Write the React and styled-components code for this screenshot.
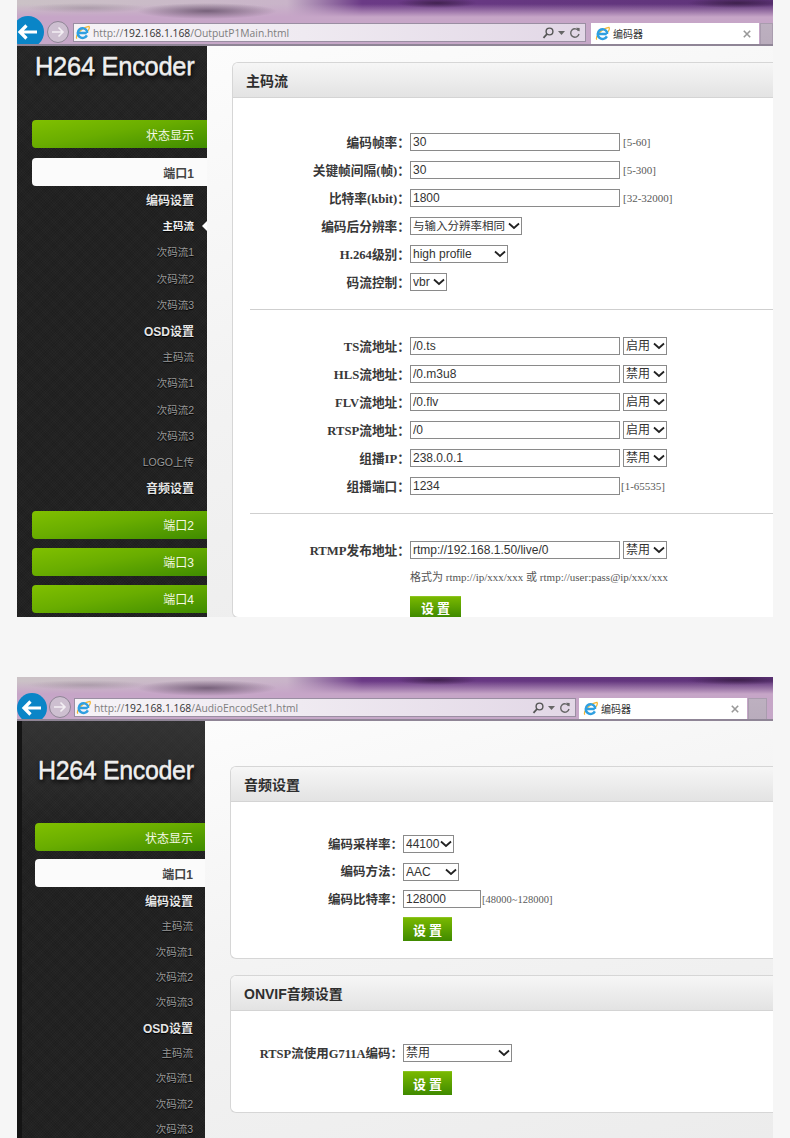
import React from "react";
import styled, { createGlobalStyle } from "styled-components";

const Global = createGlobalStyle`
  html, body { margin: 0; padding: 0; background: #f6f6f6; height: 1138px; overflow: hidden; }
  * { box-sizing: border-box; }
`;

const Page = styled.div`
  width: 756px;
  margin-left: 17px;
  display: flex;
  flex-direction: column;
  gap: 60px;
`;
const Shot = styled.section`
  height: ${(p) => p.$h}px;
  overflow: hidden;
  display: flex;
  flex-direction: column;
`;

/* ---------- browser chrome ---------- */
const Chrome = styled.header`
  height: ${(p) => p.$h}px;
  flex: none;
  padding-top: ${(p) => p.$pad}px;
  display: flex;
  align-items: flex-start;
  overflow: hidden;
  border-bottom: 2px solid #8f8596;
  background:
    radial-gradient(ellipse 70px 8px at 190px 11px, rgba(85, 65, 90, .7), rgba(85, 65, 90, 0)),
    radial-gradient(ellipse 60px 5px at 70px 8px, rgba(120, 110, 120, .35), rgba(120, 110, 120, 0)),
    radial-gradient(ellipse 40px 5px at 420px 3px, rgba(40, 20, 45, .6), rgba(40, 20, 45, 0)),
    radial-gradient(ellipse 50px 5px at 720px 3px, rgba(40, 20, 45, .6), rgba(40, 20, 45, 0)),
    linear-gradient(180deg, rgba(197, 164, 198, 0) 0, rgba(197, 164, 198, 0) 4px, #c6a5c7 17px, #c6a8c8 100%),
    linear-gradient(90deg, #cbc2c6 0, #c9b4c9 270px, #6b3a86 345px, #5e3379 100%);
`;
const BackSlot = styled.div`
  width: ${(p) => p.$w}px;
  margin-top: -${(p) => p.$up}px;
  flex: none;
  height: 32px;
`;
const ForwardSlot = styled.div`
  width: ${(p) => p.$w}px;
  margin-top: -3px;
  flex: none;
  height: 24px;
`;
const Address = styled.div`
  width: ${(p) => p.$w}px;
  flex: none;
  height: 19px;
  display: flex;
  align-items: center;
  gap: 3px;
  padding: 0 4px 0 1px;
  border: 1px solid #9a8ea2;
  background: linear-gradient(90deg, #f6f3f7 0, #efeaf1 45%, #e2d7e6 100%);
  font: 10.3px "Open Sans", "Liberation Sans", sans-serif;
  color: #7d7d7d;
`;
const Url = styled.span`
  flex: 1;
  white-space: nowrap;
  & b { font-weight: 400; color: #333; }
`;
const Tools = styled.div`
  display: flex;
  align-items: center;
  gap: 4px;
`;
const Tab = styled.div`
  width: 168px;
  margin-left: ${(p) => p.$gap}px;
  height: 23px;
  flex: none;
  display: flex;
  align-items: center;
  gap: 3px;
  padding: 0 8px 2px 4px;
  background: #fff;
  font: 10px "Noto Sans CJK SC", sans-serif;
  color: #333;
  & > span { flex: 1; }
`;
const TabStub = styled.div`
  flex: 1;
  margin-left: 1px;
  margin-right: ${(p) => p.$right}px;
  height: 22px;
  background: linear-gradient(180deg, #bdb0c0, #b9acbc);
  border: 1px solid #a99cae;
  border-bottom: 0;
`;

/* ---------- body ---------- */
const Body = styled.div`
  flex: 1;
  min-height: 0;
  display: flex;
`;
const Sidebar = styled.aside`
  width: ${(p) => p.$w}px;
  flex: none;
  border-left: ${(p) => p.$strip}px solid #141414;
  background:
    linear-gradient(180deg, rgba(70, 70, 70, ${(p) => p.$glow}) 0, rgba(70, 70, 70, 0) 110px),
    repeating-linear-gradient(45deg, rgba(255, 255, 255, .012) 0 1px, rgba(0, 0, 0, .03) 1px 2px),
    repeating-linear-gradient(-45deg, rgba(255, 255, 255, .012) 0 1px, rgba(0, 0, 0, .03) 1px 2px),
    #202020;
  display: flex;
  flex-direction: column;
  font: 12px "Liberation Sans", "Noto Sans CJK SC", sans-serif;
`;
const Logo = styled.div`
  height: ${(p) => p.$h}px;
  flex: none;
  padding: ${(p) => p.$top}px 0 0 ${(p) => p.$left}px;
  font: ${(p) => p.$size}px/1 "Liberation Sans", sans-serif;
  letter-spacing: ${(p) => p.$track}px;
  white-space: nowrap;
  color: #f0f0f0;
  -webkit-text-stroke: .3px #e6e6e6;
  text-shadow: 0 1px 0 #8a8a8a, 1px 3px 4px #000;
`;
const NavButton = styled.div`
  height: 28px;
  flex: none;
  margin: 0 0 ${(p) => p.$after}px ${(p) => p.$left}px;
  padding-right: ${(p) => p.$right}px;
  display: flex;
  align-items: center;
  justify-content: flex-end;
  border-radius: 4px 0 0 4px;
  background: ${(p) => (p.$open ? "#fbfbfb" : "linear-gradient(170deg, #80c000 0, #69ad00 45%, #3f8c00 100%)")};
  color: ${(p) => (p.$open ? "#444" : "#f4f8e4")};
  font-weight: ${(p) => (p.$open ? 700 : 400)};
`;
const SubList = styled.div`
  margin: ${(p) => p.$top}px 0 ${(p) => p.$bottom}px;
  display: flex;
  flex-direction: column;
`;
const SubItem = styled.div`
  position: relative;
  height: ${(p) => p.$step}px;
  flex: none;
  padding-right: ${(p) => p.$right}px;
  display: flex;
  align-items: center;
  justify-content: flex-end;
  font-size: ${(p) => (p.$head ? 12 : 10.5)}px;
  color: ${(p) => (p.$head ? "#e6e6e6" : p.$active ? "#f2f2f2" : "#999")};
  font-weight: ${(p) => (p.$head || p.$active ? 700 : 400)};
  text-shadow: 0 1px 1px #000;
`;
const ActiveMark = styled.i`
  position: absolute;
  right: 0;
  top: 50%;
  margin-top: -5px;
  border: 5px solid transparent;
  border-right-color: #fff;
  border-left-width: 0;
`;

const Main = styled.main`
  flex: 1;
  min-width: 0;
  padding: ${(p) => p.$top}px 0 0 25px;
  background: linear-gradient(165deg, #fcfcfc 0, #f3f3f3 45%, #ececec 100%);
`;
const Card = styled.article`
  margin-bottom: 16px;
  background: #fff;
  border: 1px solid #d6d6d6;
  border-right: 0;
  border-radius: 6px 0 0 6px;
  overflow: hidden;
`;
const CardHeader = styled.h2`
  margin: 0;
  height: 35px;
  padding: 0 13px;
  display: flex;
  align-items: center;
  background: linear-gradient(180deg, #f6f6f6, #e3e3e3);
  border-bottom: 1px solid #d4d4d4;
  font: 700 14px "Liberation Sans", "Noto Sans CJK SC", sans-serif;
  color: #2e2e2e;
`;
const Form = styled.div`
  padding: ${(p) => p.$top}px 0 ${(p) => p.$bottom}px 17px;
  display: flex;
  flex-direction: column;
`;
const Row = styled.div`
  height: 18px;
  margin-bottom: ${(p) => p.$gap}px;
  display: flex;
  align-items: center;
`;
const Label = styled.label`
  width: ${(p) => p.$w}px;
  flex: none;
  padding-bottom: 2px;
  text-align: right;
  white-space: nowrap;
  font: 600 ${(p) => p.$size}px "Liberation Serif", "Noto Sans CJK SC", serif;
  color: #383838;
`;
const TextInput = styled.input`
  width: ${(p) => p.$w}px;
  height: 18px;
  flex: none;
  padding: 0 2px;
  margin: 0;
  border: 1px solid #8a8a8a;
  border-radius: 0;
  outline: 0;
  background: #fff;
  font: 12px "Liberation Sans", sans-serif;
  color: #333;
`;
const SelectWrap = styled.span`
  position: relative;
  width: ${(p) => p.$w}px;
  height: 18px;
  flex: none;
  margin-left: ${(p) => p.$left || 0}px;
  & svg { position: absolute; right: 2px; top: 5px; pointer-events: none; }
`;
const NativeSelect = styled.select`
  width: 100%;
  height: 18px;
  display: block;
  padding: 0 0 0 2px;
  margin: 0;
  appearance: none;
  border: 1px solid #8a8a8a;
  border-radius: 0;
  background: #fff;
  font: ${(p) => p.$size || 12}px "Liberation Sans", "Noto Sans CJK SC", sans-serif;
  color: #333;
`;
const Hint = styled.span`
  margin-left: ${(p) => p.$left}px;
  font: ${(p) => p.$size || 11}px "Liberation Serif", serif;
  color: #5a5a5a;
  white-space: nowrap;
`;
const Rule = styled.hr`
  margin: ${(p) => p.$top}px 0 27px;
  border: 0;
  border-top: 1px solid #cfcfcf;
`;
const Note = styled.div`
  height: 18px;
  margin: 0 0 11px ${(p) => p.$left}px;
  display: flex;
  align-items: center;
  font: 11px "Liberation Serif", "Noto Sans CJK SC", serif;
  color: #555;
  white-space: pre;
`;
const Submit = styled.button`
  width: ${(p) => p.$w}px;
  height: ${(p) => p.$h}px;
  margin: 0 0 0 ${(p) => p.$left}px;
  padding: 0;
  flex: none;
  border: 0;
  border-top: 1px solid #8cc420;
  background: linear-gradient(180deg, #79b800, #3f8a00);
  color: #fff;
  font: 700 13px/1 "Noto Sans CJK SC", sans-serif;
  letter-spacing: 3px;
  text-indent: 3px;
`;

/* ---------- drawings ---------- */
const BackIcon = ({ cx, cy, r }) => (
  <svg width="40" height="32" viewBox="0 0 40 32" style={{ display: "block", marginLeft: 0, overflow: "hidden" }}>
    <circle cx={cx} cy={cy} r={r} fill="#0a85c7" />
    <path d={`M${cx + 9} ${cy}H${cx - 6}M${cx - 1.5} ${cy - 6.5}l-6.5 6.5l6.5 6.5`} fill="none" stroke="#fff" strokeWidth="3.2" />
  </svg>
);
const ForwardIcon = () => (
  <svg width="24" height="24" viewBox="0 0 24 24" style={{ display: "block" }}>
    <circle cx="12" cy="12" r="10.5" fill="#cdbfd0" stroke="#8f8596" strokeWidth="1" />
    <path d="M6 12h11M12.5 7.5 17 12l-4.5 4.5" fill="none" stroke="#f3eff4" strokeWidth="1.6" />
  </svg>
);
const IeIcon = () => (
  <svg width="15" height="15" viewBox="0 0 16 16" style={{ flex: "none" }}>
    <path d="M2 14.5C0 12 6 3 15 1.5c1 2-1 5-2.5 6" fill="none" stroke="#f2b632" strokeWidth="1.3" />
    <path d="M3.5 8.5h9M12.7 11a5.2 5.2 0 1 1 .1-4.6v2" fill="none" stroke="#2f9fe0" strokeWidth="2.6" />
  </svg>
);
const SearchIcon = () => (
  <svg width="12" height="12" viewBox="0 0 12 12">
    <circle cx="7.5" cy="4.5" r="3.4" fill="none" stroke="#555" strokeWidth="1.4" />
    <path d="M5 7 1.5 10.8" stroke="#555" strokeWidth="1.8" />
  </svg>
);
const CaretIcon = () => (
  <svg width="7" height="4" viewBox="0 0 7 4"><path d="M0 0h7L3.5 4z" fill="#666" /></svg>
);
const RefreshIcon = () => (
  <svg width="12" height="12" viewBox="0 0 12 12">
    <path d="M9.6 4a4.2 4.2 0 1 0 .4 3" fill="none" stroke="#666" strokeWidth="1.4" />
    <path d="M7 .8 10.6 1v3.6z" fill="#666" />
  </svg>
);
const CloseIcon = () => (
  <svg width="8" height="8" viewBox="0 0 8 8"><path d="M.8.8l6.4 6.4M7.2.8.8 7.2" stroke="#999" strokeWidth="1.6" /></svg>
);
const Chevron = () => (
  <svg width="12" height="8" viewBox="0 0 12 8"><path d="M1 1.5 6 6l5-4.5" fill="none" stroke="#222" strokeWidth="1.8" /></svg>
);

/* ---------- shared pieces ---------- */
const BrowserBar = ({ h, pad, host, path, addressWidth, tabGap, stubRight, back, forwardW, backUp, backW }) => (
  <Chrome $h={h} $pad={pad}>
    <BackSlot $w={backW} $up={backUp}><BackIcon {...back} /></BackSlot>
    <ForwardSlot $w={forwardW}><ForwardIcon /></ForwardSlot>
    <Address $w={addressWidth}>
      <IeIcon />
      <Url>http://<b>{host}</b>{path}</Url>
      <Tools><SearchIcon /><CaretIcon /><RefreshIcon /></Tools>
    </Address>
    <Tab $gap={tabGap}>
      <IeIcon />
      <span>编码器</span>
      <CloseIcon />
    </Tab>
    <TabStub $right={stubRight} />
  </Chrome>
);

const Select = ({ w, left, value, options, size }) => (
  <SelectWrap $w={w} $left={left}>
    <NativeSelect defaultValue={value} $size={size}>
      {(options || [value]).map((o) => <option key={o}>{o}</option>)}
    </NativeSelect>
    <Chevron />
  </SelectWrap>
);

const toggle = ["启用", "禁用"];
const LABEL_A = 160;
const LinkRow = ({ label, value, mode }) => (
  <Row $gap={10}>
    <Label $w={LABEL_A} $size={12.7}>{label}</Label>
    <TextInput $w={210} defaultValue={value} />
    <Select w={44} left={3} value={mode} options={toggle} />
  </Row>
);

const subA = [
  ["编码设置", "head"], ["主码流", "active"], ["次码流1"], ["次码流2"], ["次码流3"],
  ["OSD设置", "head"], ["主码流"], ["次码流1"], ["次码流2"], ["次码流3"], ["LOGO上传"], ["音频设置", "head"],
];
const subB = [
  ["编码设置", "head"], ["主码流"], ["次码流1"], ["次码流2"], ["次码流3"],
  ["OSD设置", "head"], ["主码流"], ["次码流1"], ["次码流2"], ["次码流3"],
];
const SubNav = ({ items, step, top, bottom, right }) => (
  <SubList $top={top} $bottom={bottom}>
    {items.map(([text, kind], i) => (
      <SubItem key={i} $step={step} $right={right} $head={kind === "head"} $active={kind === "active"}>
        {text}
        {kind === "active" && <ActiveMark />}
      </SubItem>
    ))}
  </SubList>
);

export default function App() {
  return (
    <Page>
      <Global />
      <Shot $h={617}>
        <BrowserBar h={46} pad={23} host="192.168.1.168" path="/OutputP1Main.html" addressWidth={513} tabGap={5} stubRight={0}
          back={{ cx: 11, cy: 16, r: 16 }} backUp={7} backW={29} forwardW={27} />
        <Body>
          <Sidebar $w={190} $strip={0} $glow={0.12}>
            <Logo $h={74} $top={8} $left={18} $size={25.5} $track={-0.3}>H264 Encoder</Logo>
            <NavButton $left={15} $right={13} $after={10}>状态显示</NavButton>
            <NavButton $left={15} $right={13} $after={0} $open>端口1</NavButton>
            <SubNav items={subA} step={26.2} top={0.5} bottom={10.1} right={13} />
            <NavButton $left={15} $right={13} $after={9}>端口2</NavButton>
            <NavButton $left={15} $right={13} $after={9}>端口3</NavButton>
            <NavButton $left={15} $right={13} $after={9}>端口4</NavButton>
          </Sidebar>
          <Main $top={16}>
            <Card>
              <CardHeader>主码流</CardHeader>
              <Form $top={35} $bottom={0}>
                <Row $gap={10}><Label $w={LABEL_A} $size={12.7}>编码帧率：</Label><TextInput $w={210} defaultValue="30" /><Hint $left={3}>[5-60]</Hint></Row>
                <Row $gap={10}><Label $w={LABEL_A} $size={12.7}>关键帧间隔(帧)：</Label><TextInput $w={210} defaultValue="30" /><Hint $left={3}>[5-300]</Hint></Row>
                <Row $gap={10}><Label $w={LABEL_A} $size={12.7}>比特率(kbit)：</Label><TextInput $w={210} defaultValue="1800" /><Hint $left={3}>[32-32000]</Hint></Row>
                <Row $gap={10}><Label $w={LABEL_A} $size={12.7}>编码后分辨率：</Label><Select w={112} value="与输入分辨率相同" size={11.5} /></Row>
                <Row $gap={10}><Label $w={LABEL_A} $size={12.7}>H.264级别：</Label><Select w={98} value="high profile" /></Row>
                <Row $gap={0}><Label $w={LABEL_A} $size={12.7}>码流控制：</Label><Select w={37} value="vbr" /></Row>
                <Rule $top={18} />
                <LinkRow label="TS流地址：" value="/0.ts" mode="启用" />
                <LinkRow label="HLS流地址：" value="/0.m3u8" mode="禁用" />
                <LinkRow label="FLV流地址：" value="/0.flv" mode="启用" />
                <LinkRow label="RTSP流地址：" value="/0" mode="启用" />
                <LinkRow label="组播IP：" value="238.0.0.1" mode="禁用" />
                <Row $gap={0}><Label $w={LABEL_A} $size={12.7}>组播端口：</Label><TextInput $w={210} defaultValue="1234" /><Hint $left={1}>[1-65535]</Hint></Row>
                <Rule $top={18} />
                <Row $gap={8}><Label $w={LABEL_A} $size={12.7}>RTMP发布地址：</Label><TextInput $w={210} defaultValue="rtmp://192.168.1.50/live/0" /><Select w={44} left={3} value="禁用" options={toggle} /></Row>
                <Note $left={LABEL_A}>格式为 rtmp://ip/xxx/xxx 或 rtmp://user:pass@ip/xxx/xxx</Note>
                <Submit $w={51} $h={21} $left={LABEL_A}>设置</Submit>
              </Form>
            </Card>
          </Main>
        </Body>
      </Shot>

      <Shot $h={461}>
        <BrowserBar h={44} pad={21} host="192.168.1.168" path="/AudioEncodSet1.html" addressWidth={502} tabGap={3} stubRight={6}
          back={{ cx: 15, cy: 16, r: 15 }} backUp={6} backW={31} forwardW={26} />
        <Body>
          <Sidebar $w={188} $strip={5} $glow={0.5}>
            <Logo $h={102} $top={37} $left={16} $size={25} $track={-0.35}>H264 Encoder</Logo>
            <NavButton $left={13} $right={12} $after={8}>状态显示</NavButton>
            <NavButton $left={13} $right={12} $after={0} $open>端口1</NavButton>
            <SubNav items={subB} step={25.3} top={1} bottom={0} right={12} />
          </Sidebar>
          <Main $top={45}>
            <Card>
              <CardHeader>音频设置</CardHeader>
              <Form $top={33} $bottom={17}>
                <Row $gap={9.5}><Label $w={155} $size={12.5}>编码采样率：</Label><Select w={51} value="44100" /></Row>
                <Row $gap={9.5}><Label $w={155} $size={12.5}>编码方法：</Label><Select w={56} value="AAC" /></Row>
                <Row $gap={9}><Label $w={155} $size={12.5}>编码比特率：</Label><TextInput $w={78} defaultValue="128000" /><Hint $left={1} $size={10.5}>[48000~128000]</Hint></Row>
                <Submit $w={49} $h={24} $left={155}>设置</Submit>
              </Form>
            </Card>
            <Card>
              <CardHeader>ONVIF音频设置</CardHeader>
              <Form $top={33} $bottom={17}>
                <Row $gap={9}><Label $w={155} $size={12.5}>RTSP流使用G711A编码：</Label><Select w={109} value="禁用" /></Row>
                <Submit $w={49} $h={24} $left={155}>设置</Submit>
              </Form>
            </Card>
          </Main>
        </Body>
      </Shot>
    </Page>
  );
}
